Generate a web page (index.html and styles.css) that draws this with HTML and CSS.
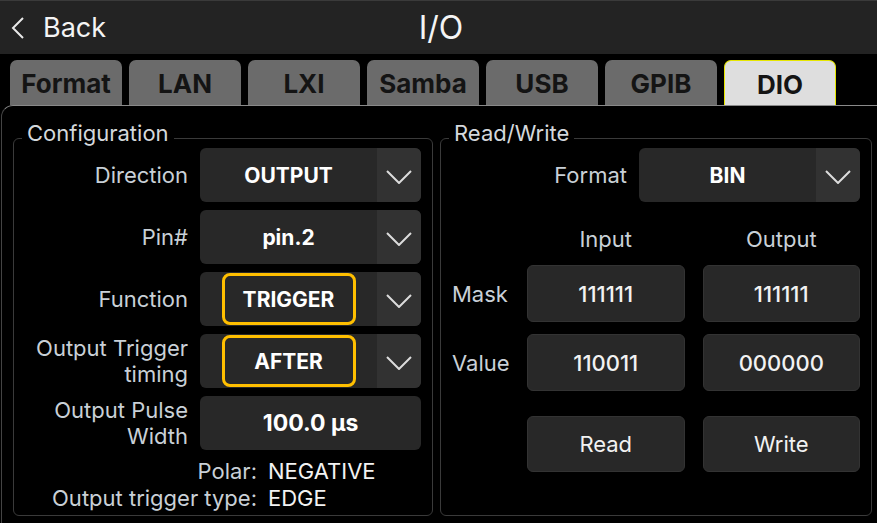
FILE: index.html
```html
<!DOCTYPE html>
<html lang="en">
<head>
    <meta charset="UTF-8">
    <meta name="viewport" content="width=device-width, initial-scale=1.0">
    <title>I/O</title>
    <link rel="stylesheet" href="styles.css">
</head>
<body>
    <div class="header">
        <div class="back">
            <svg class="back-icon" width="16" height="24" viewBox="0 0 16 24">
                <polyline points="13,2 3,12 13,22" fill="none" stroke="#e8e8e8" stroke-width="2"/>
            </svg>
            <span>Back</span>
        </div>
        <div class="title">I/O</div>
        <div></div>
    </div>

    <div class="tabs">
        <div class="tab">Format</div>
        <div class="tab">LAN</div>
        <div class="tab">LXI</div>
        <div class="tab">Samba</div>
        <div class="tab">USB</div>
        <div class="tab">GPIB</div>
        <div class="tab active">DIO</div>
    </div>

    <div class="panel">
        <fieldset class="group group-config">
            <legend>Configuration</legend>
            <div class="form-grid">
                <label>Direction</label>
                <div class="dropdown">
                    <div class="dropdown-value">OUTPUT</div>
                    <div class="dropdown-arrow"><svg width="26" height="14" viewBox="0 0 26 14"><polyline points="1,1 13,13 25,1" fill="none" stroke="#dcdcdc" stroke-width="2"/></svg></div>
                </div>

                <label>Pin#</label>
                <div class="dropdown">
                    <div class="dropdown-value">pin.2</div>
                    <div class="dropdown-arrow"><svg width="26" height="14" viewBox="0 0 26 14"><polyline points="1,1 13,13 25,1" fill="none" stroke="#dcdcdc" stroke-width="2"/></svg></div>
                </div>

                <label>Function</label>
                <div class="dropdown">
                    <div class="dropdown-value"><span class="highlight">TRIGGER</span></div>
                    <div class="dropdown-arrow"><svg width="26" height="14" viewBox="0 0 26 14"><polyline points="1,1 13,13 25,1" fill="none" stroke="#dcdcdc" stroke-width="2"/></svg></div>
                </div>

                <label class="two-line">Output Trigger<br>timing</label>
                <div class="dropdown">
                    <div class="dropdown-value"><span class="highlight">AFTER</span></div>
                    <div class="dropdown-arrow"><svg width="26" height="14" viewBox="0 0 26 14"><polyline points="1,1 13,13 25,1" fill="none" stroke="#dcdcdc" stroke-width="2"/></svg></div>
                </div>

                <label class="two-line">Output Pulse<br>Width</label>
                <div class="field">100.0 μs</div>
            </div>

            <div class="info-grid">
                <span class="info-label">Polar:</span>
                <span class="info-value">NEGATIVE</span>
                <span class="info-label">Output trigger type:</span>
                <span class="info-value">EDGE</span>
            </div>
        </fieldset>

        <fieldset class="group group-rw">
            <legend>Read/Write</legend>
            <div class="form-grid">
                <label>Format</label>
                <div class="dropdown">
                    <div class="dropdown-value">BIN</div>
                    <div class="dropdown-arrow"><svg width="26" height="14" viewBox="0 0 26 14"><polyline points="1,1 13,13 25,1" fill="none" stroke="#dcdcdc" stroke-width="2"/></svg></div>
                </div>
            </div>

            <div class="io-grid">
                <span></span>
                <span class="col-head">Input</span>
                <span class="col-head">Output</span>

                <span class="row-label">Mask</span>
                <div class="box value">111111</div>
                <div class="box value">111111</div>

                <span class="row-label">Value</span>
                <div class="box value">110011</div>
                <div class="box value">000000</div>

                <span></span>
                <div class="box button">Read</div>
                <div class="box button">Write</div>
            </div>
        </fieldset>
    </div>
</body>
</html>
```

FILE: styles.css
```css
html, body {
    margin: 0;
    padding: 0;
}
body {
    width: 877px;
    height: 523px;
    overflow: hidden;
    background-color: #000;
    font-family: Inter, "Noto Sans", sans-serif;
    color: #eee;
}
.header {
    height: 54px;
    background-color: #232323;
    border-top: 1px solid #3a3a3a;
    box-sizing: border-box;
    display: grid;
    grid-template-columns: 1fr auto 1fr;
    align-items: center;
}
.back {
    display: flex;
    align-items: center;
    padding-left: 10px;
    font-size: 27px;
    color: #f4f4f4;
}
.back-icon {
    margin-right: 17px;
}
.title {
    font-size: 32px;
    color: #f4f4f4;
    padding-left: 5px;
}
.tabs {
    display: flex;
    gap: 7px;
    padding-left: 10px;
    margin-top: 6px;
    height: 45px;
}
.tab {
    width: 112px;
    box-sizing: border-box;
    background-color: #6b6b6b;
    border-radius: 7px 7px 0 0;
    color: #141414;
    font-size: 26px;
    font-weight: bold;
    display: flex;
    align-items: center;
    justify-content: center;
    padding-top: 2px;
}
.tab.active {
    background-color: #dedede;
    border: 1px solid #e6e600;
    border-bottom: none;
}
.panel {
    display: flex;
    gap: 7px;
    padding: 16px 0 0 11px;
    height: 418px;
    box-sizing: border-box;
    border-top: 1px solid #8a8a8a;
    border-left: 1px solid #444;
    border-top-left-radius: 12px;
    margin-left: 1px;
}
.group {
    margin: 0;
    padding: 0 11px 0 0;
    border: 1px solid #3a3a3a;
    border-radius: 6px;
    height: 394px;
    box-sizing: border-box;
}
.group legend {
    margin-left: 8px;
    padding: 0 5px 10px 5px;
    font-size: 22px;
    line-height: 22px;
    color: #d4d8dc;
}
.group-config {
    width: 420px;
}
.group-rw {
    width: 432px;
}
.form-grid {
    display: grid;
    grid-template-columns: 1fr 221px;
    column-gap: 12px;
    row-gap: 8px;
    grid-auto-rows: 54px;
    margin-top: -6px;
}
label {
    display: flex;
    align-items: center;
    justify-content: flex-end;
    text-align: right;
    font-size: 22px;
    line-height: 26px;
    color: #c9d0d7;
}
.dropdown {
    display: flex;
    background-color: #282828;
    border-radius: 6px;
    overflow: hidden;
}
.dropdown-value {
    flex: 1;
    display: flex;
    align-items: center;
    justify-content: center;
    font-size: 21px;
    font-weight: bold;
    color: #fff;
}
.dropdown-arrow {
    width: 44px;
    background-color: #323232;
    display: flex;
    align-items: center;
    justify-content: center;
    padding-top: 3px;
}
.highlight {
    width: 134px;
    height: 52px;
    box-sizing: border-box;
    border: 3px solid #ffbf00;
    border-radius: 8px;
    display: flex;
    align-items: center;
    justify-content: center;
}
.field {
    background-color: #282828;
    border-radius: 6px;
    display: flex;
    align-items: center;
    justify-content: center;
    font-size: 23px;
    font-weight: bold;
    color: #fff;
}
.info-grid {
    display: grid;
    grid-template-columns: 243px auto;
    column-gap: 11px;
    margin-top: 8px;
    font-size: 22px;
    line-height: 27px;
}
.info-label {
    text-align: right;
    color: #c9d0d7;
}
.info-value {
    color: #f2f2f2;
}
.io-grid {
    display: grid;
    grid-template-columns: 57px 1fr 1fr;
    column-gap: 18px;
    grid-template-rows: 28px 57px 57px 56px;
    row-gap: 12px;
    padding-left: 11px;
    margin-top: 23px;
}
.io-grid .box.button {
    margin-top: 13px;
    margin-bottom: -13px;
}
.col-head {
    text-align: center;
    font-size: 22px;
    line-height: 28px;
    color: #c9d0d7;
}
.row-label {
    display: flex;
    align-items: center;
    font-size: 22px;
    color: #c9d0d7;
}
.box {
    background-color: #282828;
    border: 1px solid #333;
    border-radius: 6px;
    display: flex;
    align-items: center;
    justify-content: center;
    font-size: 22px;
    color: #f2f2f2;
}
.box.value {
    font-weight: 500;
}
```
